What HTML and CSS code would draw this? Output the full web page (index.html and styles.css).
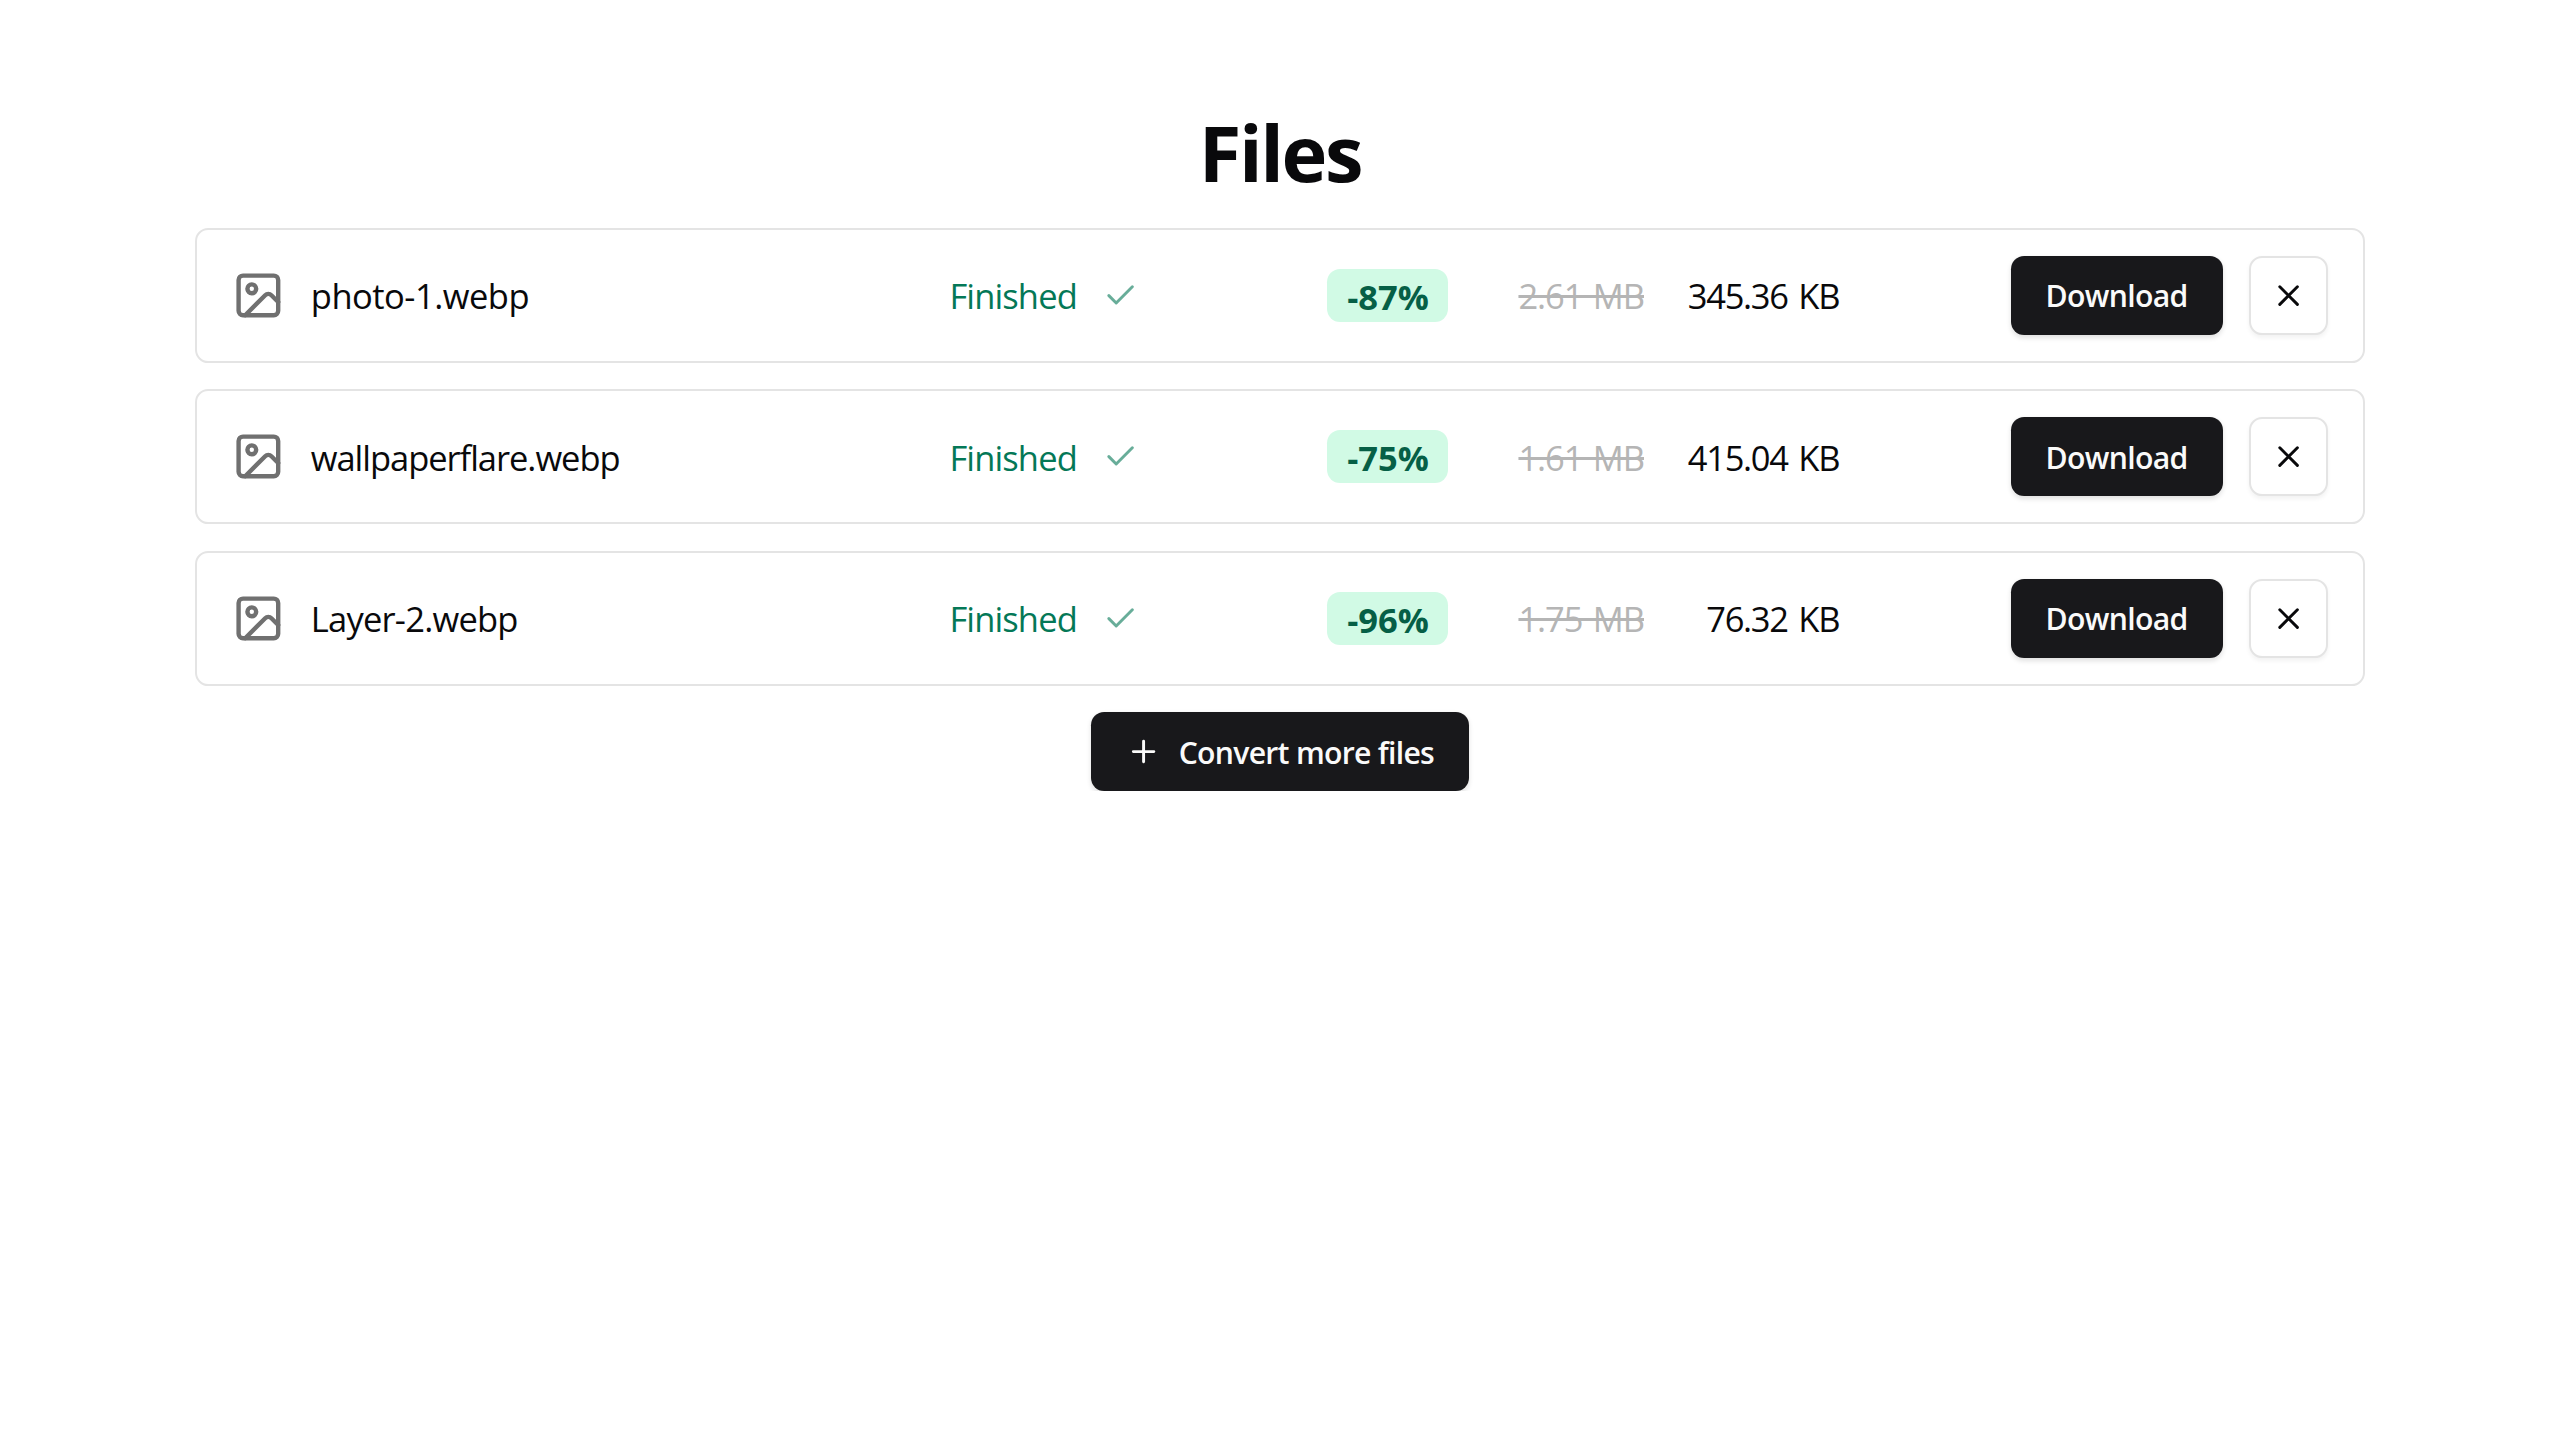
FILE: index.html
```
<!DOCTYPE html>
<html lang="en">
<head>
<meta charset="utf-8">
<title>Files</title>
<link rel="stylesheet" href="styles.css">
</head>
<body>
<svg class="sprite" aria-hidden="true">
  <symbol id="image" viewBox="0 0 24 24"><rect width="18" height="18" x="3" y="3" rx="2" ry="2"/><circle cx="9" cy="9" r="2"/><path d="m21 15-3.086-3.086a2 2 0 0 0-2.828 0L6 21"/></symbol>
  <symbol id="check" viewBox="0 0 24 24"><path d="M20 6 9 17l-5-5"/></symbol>
  <symbol id="close" viewBox="0 0 24 24"><path d="M18 6 6 18M6 6l12 12"/></symbol>
  <symbol id="plus" viewBox="0 0 24 24"><path d="M5 12h14M12 5v14"/></symbol>
</svg>
<main class="page">
  <h1 class="title">Files</h1>
  <ul class="files">
    <li class="file">
      <div class="file-name"><svg class="icon icon-file"><use href="#image"/></svg><span class="label name-photo">photo-1.webp</span></div>
      <div class="status"><span class="label">Finished</span><svg class="icon icon-check"><use href="#check"/></svg></div>
      <span class="badge">-87%</span>
      <span class="label size-old"><s>2.61 MB</s></span>
      <span class="label size-new">345.36 KB</span>
      <div class="actions"><button class="button"><span class="label">Download</span></button><button class="button button-outline" aria-label="Remove"><svg class="icon"><use href="#close"/></svg></button></div>
    </li>
    <li class="file">
      <div class="file-name"><svg class="icon icon-file"><use href="#image"/></svg><span class="label name-wallpaper">wallpaperflare.webp</span></div>
      <div class="status"><span class="label">Finished</span><svg class="icon icon-check"><use href="#check"/></svg></div>
      <span class="badge">-75%</span>
      <span class="label size-old"><s>1.61 MB</s></span>
      <span class="label size-new">415.04 KB</span>
      <div class="actions"><button class="button"><span class="label">Download</span></button><button class="button button-outline" aria-label="Remove"><svg class="icon"><use href="#close"/></svg></button></div>
    </li>
    <li class="file">
      <div class="file-name"><svg class="icon icon-file"><use href="#image"/></svg><span class="label name-layer">Layer-2.webp</span></div>
      <div class="status"><span class="label">Finished</span><svg class="icon icon-check"><use href="#check"/></svg></div>
      <span class="badge">-96%</span>
      <span class="label size-old"><s>1.75 MB</s></span>
      <span class="label size-new">76.32 KB</span>
      <div class="actions"><button class="button"><span class="label">Download</span></button><button class="button button-outline" aria-label="Remove"><svg class="icon"><use href="#close"/></svg></button></div>
    </li>
  </ul>
  <button class="button button-more"><svg class="icon"><use href="#plus"/></svg><span class="label">Convert more files</span></button>
</main>
</body>
</html>
```
FILE: styles.css
```
* { box-sizing: border-box; }

body {
  margin: 0;
  background: #fff;
  color: #09090b;
  font-family: "Open Sans", "Noto Sans", sans-serif;
  font-size: 34.5px;
  line-height: 52.8px;
}

.sprite { display: none; }

.icon {
  width: 35.2px;
  height: 35.2px;
  flex: none;
  fill: none;
  stroke: currentColor;
  stroke-width: 2;
  stroke-linecap: round;
  stroke-linejoin: round;
}

.label { padding-top: 2.4px; }

.page {
  width: 2170px;
  margin: 0 auto;
  padding-top: 107.8px;
  display: flex;
  flex-direction: column;
  align-items: center;
}

.title {
  margin: 0 0 32px;
  font-size: 77.6px;
  font-weight: 700;
  line-height: 88px;
  letter-spacing: -2.4px;
}

.files {
  width: 100%;
  margin: 0 0 26.5px;
  padding: 0;
  list-style: none;
  display: flex;
  flex-direction: column;
  gap: 26.5px;
}

.file {
  height: 135px;
  padding: 0 35px 0 34.6px;
  border: 2px solid #e4e4e4;
  border-radius: 13.2px;
  display: grid;
  grid-template-columns: 717px 378.4px 121px 196px 196px 1fr;
  align-items: center;
}

.file-name { display: flex; align-items: center; gap: 26.4px; }
.icon-file { width: 52.8px; height: 52.8px; color: #707070; }
.name-photo { letter-spacing: -.5px; }
.name-wallpaper { letter-spacing: -1.04px; }
.name-layer { letter-spacing: -.77px; }

.status {
  display: flex;
  align-items: center;
  gap: 26.4px;
  padding-left: .8px;
  color: #047857;
  letter-spacing: -.87px;
}
.icon-check { opacity: .6; }

.badge {
  height: 52.8px;
  padding-left: 1px;
  border-radius: 13.2px;
  background: #d1fae5;
  color: #065f46;
  font-weight: 700;
  line-height: 55px;
  text-align: center;
}

.size-old {
  color: #b5b5b5;
  text-align: right;
  letter-spacing: -1.07px;
  word-spacing: 2.5px;
}
.size-old s { text-decoration-thickness: 3px; }

.size-new {
  padding-right: .8px;
  text-align: right;
  letter-spacing: -1.3px;
  word-spacing: 3px;
}

.actions { display: flex; justify-content: flex-end; gap: 26.4px; }

.button {
  width: 212px;
  height: 79px;
  padding: 0;
  border: 0;
  border-radius: 13.2px;
  background: #18181b;
  color: #fafafa;
  box-shadow: 0 2.2px 5px rgba(0, 0, 0, .12);
  font: 600 30.2px/44px "Open Sans", "Noto Sans", sans-serif;
  letter-spacing: -.66px;
  display: flex;
  align-items: center;
  justify-content: center;
}

.button-outline {
  width: 79px;
  border: 2px solid #e4e4e4;
  background: #fff;
  color: #09090b;
  box-shadow: 0 2.2px 4.4px rgba(0, 0, 0, .05);
}

.button-more {
  width: 378px;
  gap: 17.6px;
  letter-spacing: -.72px;
}
```
